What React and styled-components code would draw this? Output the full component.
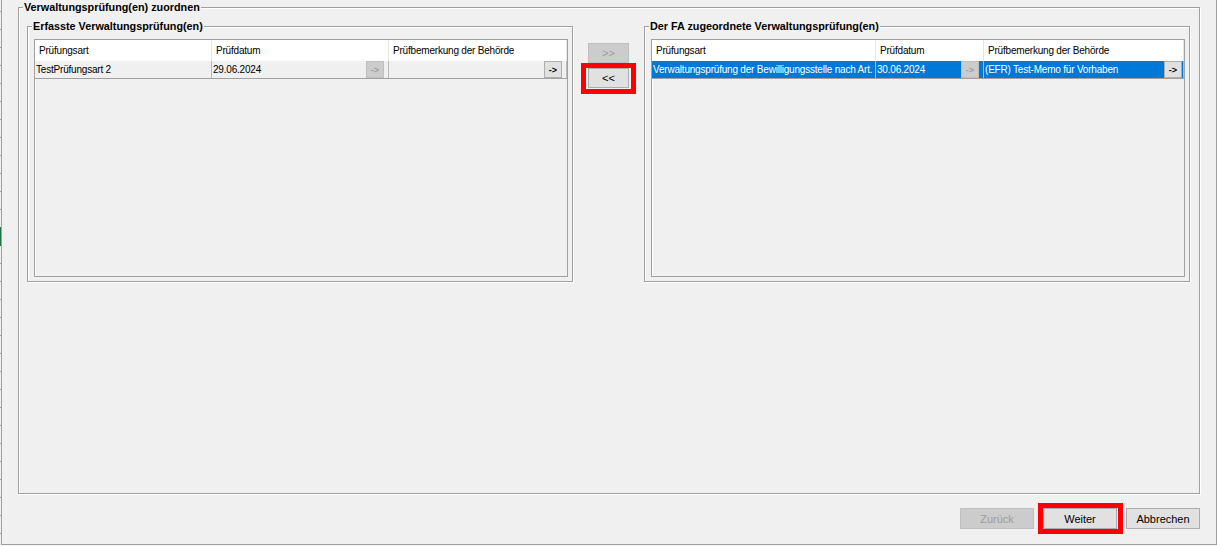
import React from 'react'
import styled, { createGlobalStyle, css } from 'styled-components'

const GlobalStyle = createGlobalStyle`
  html, body {
    margin: 0;
    padding: 0;
    background: #f0f0f0;
  }
  body {
    font-family: "Liberation Sans", Arial, sans-serif;
    font-size: 11px;
    color: #000;
  }
  #root {
    width: 1217px;
    height: 546px;
    overflow: hidden;
  }
`

const leftRows = [
  { art: 'TestPrüfungsart 2', datum: '29.06.2024', memo: '' },
]

const rightRows = [
  {
    art: 'Verwaltungsprüfung der Bewilligungsstelle nach Art.',
    datum: '30.06.2024',
    memo: '(EFR) Test-Memo für Vorhaben',
    selected: true,
  },
]

const App = () => {
  return (
    <>
      <GlobalStyle />
      <Screen>
        <SheetEdge />
        <Window>
          <OuterGroup>
            <Legend $shift={-4}>Verwaltungsprüfung(en) zuordnen</Legend>
            <Columns>
              <Group>
                <Legend $shift={-2}>Erfasste Verwaltungsprüfung(en)</Legend>
                <CheckTable cols="177px 177px 1fr" rows={leftRows} memoGap={4} />
              </Group>
              <Shuttle>
                <SideButton disabled>&gt;&gt;</SideButton>
                <SideButton $marked $ring="-6px -8px -7px -8px">&lt;&lt;</SideButton>
              </Shuttle>
              <Group>
                <Legend $shift={-2}>Der FA zugeordnete Verwaltungsprüfung(en)</Legend>
                <CheckTable cols="224px 108px 1fr" rows={rightRows} memoGap={1} />
              </Group>
            </Columns>
          </OuterGroup>
          <Footer>
            <DialogButton disabled>Zurück</DialogButton>
            <DialogButton $marked $ring="-6px -7px -6px -6px">Weiter</DialogButton>
            <DialogButton>Abbrechen</DialogButton>
          </Footer>
        </Window>
      </Screen>
    </>
  )
}

const CheckTable = ({ cols, rows, memoGap }) => (
  <Table>
    <HeadRow $cols={cols}>
      <HeadCell>Prüfungsart</HeadCell>
      <HeadCell>Prüfdatum</HeadCell>
      <HeadCell>Prüfbemerkung der Behörde</HeadCell>
    </HeadRow>
    {rows.map((row, i) => (
      <BodyRow key={i} $cols={cols} $selected={row.selected}>
        <Cell>
          <CellText>{row.art}</CellText>
        </Cell>
        <Cell>
          <CellText>{row.datum}</CellText>
          <CellButton disabled $gap={4}>-&gt;</CellButton>
        </Cell>
        <Cell>
          <CellText>{row.memo}</CellText>
          <CellButton $gap={memoGap}>-&gt;</CellButton>
        </Cell>
      </BodyRow>
    ))}
  </Table>
)

export default App

const Screen = styled.div`
  display: flex;
  width: 1217px;
  height: 546px;
`

// spreadsheet behind the dialog: row lines and the active-row marker
const SheetEdge = styled.div`
  width: 1px;
  flex: none;
  background:
    linear-gradient(#217346, #217346) 0 227px / 1px 19px no-repeat,
    repeating-linear-gradient(
      to bottom,
      transparent 0 11px,
      #a0a0a0 11px 12px,
      transparent 12px 18px
    );
`

const Window = styled.div`
  flex: 1;
  height: 545px;
  box-sizing: border-box;
  border: 1px solid #a0a0a0;
  border-top: none;
  display: flex;
  flex-direction: column;
`

const etched = css`
  border: 1px solid #a0a0a0;
  box-shadow: inset 1px 1px 0 #fff, 1px 1px 0 #fff;
  min-width: 0;
  margin: 0;
  box-sizing: border-box;
`

const OuterGroup = styled.fieldset`
  ${etched}
  margin: 0 16px;
  height: 494px;
  padding: 5px 9px 0 8px;
`

const Legend = styled.legend`
  margin-left: ${p => p.$shift}px;
  padding: 0 1px;
  font-weight: bold;
  font-size: 10.8px;
  line-height: 14px;
  background: #f0f0f0;
  white-space: nowrap;
`

const Columns = styled.div`
  display: flex;
  align-items: flex-start;
`

const Group = styled.fieldset`
  ${etched}
  width: 546px;
  flex: none;
  padding: 6px 4px 4px 6px;
`

const Shuttle = styled.div`
  flex: 1;
  display: flex;
  flex-direction: column;
  align-items: center;
  gap: 5px;
  padding-top: 24px;
`

const Table = styled.div`
  height: 238px;
  box-sizing: border-box;
  border: 1px solid #a0a0a0;
  box-shadow: inset 1px 1px 0 #fff;
  background: #f0f0f0;
  overflow: hidden;
`

const HeadRow = styled.div`
  display: grid;
  grid-template-columns: ${p => p.$cols};
  height: 21px;
  background: #fff;
`

const HeadCell = styled.div`
  padding-left: 4px;
  line-height: 21px;
  font-size: 10px;
  letter-spacing: -0.2px;
  border-right: 1px solid #e5e5e5;
  white-space: nowrap;
  overflow: hidden;
`

const BodyRow = styled.div`
  display: grid;
  grid-template-columns: ${p => p.$cols};
  height: 18px;
  box-sizing: border-box;
  border-bottom: 1px solid #a0a0a0;
  background: ${p => (p.$selected ? '#0078d7' : '#f0f0f0')};
  color: ${p => (p.$selected ? '#fff' : '#000')};
`

const Cell = styled.div`
  display: flex;
  align-items: center;
  min-width: 0;
  padding-left: 1px;
  border-right: 1px solid #b9b9b9;
  font-size: 10px;
  letter-spacing: -0.2px;
`

const CellText = styled.span`
  flex: 1;
  min-width: 0;
  white-space: nowrap;
  overflow: hidden;
`

const buttonFace = css`
  font-family: "Liberation Sans", Arial, sans-serif;
  color: #000;
  background: #e1e1e1;
  border: 1px solid #adadad;
  box-sizing: border-box;
  padding: 0;
  cursor: default;

  &:disabled {
    background: #cccccc;
    border-color: #bfbfbf;
    color: #9d9d9d;
  }

  ${p => p.$marked && css`
    position: relative;
    &::after {
      content: '';
      position: absolute;
      inset: ${p.$ring};
      border: 5px solid #ff0000;
      pointer-events: none;
    }
  `}
`

const CellButton = styled.button`
  ${buttonFace}
  flex: none;
  width: 18px;
  height: 17px;
  margin-right: ${p => p.$gap}px;
  font-size: 9px;
  font-weight: bold;
  letter-spacing: 0;
`

const SideButton = styled.button`
  ${buttonFace}
  width: 41px;
  height: 20px;
  font-size: 11px;
`

const Footer = styled.div`
  display: flex;
  justify-content: flex-end;
  gap: 9px;
  margin-top: 14px;
  padding-right: 16px;
`

const DialogButton = styled.button`
  ${buttonFace}
  width: 74px;
  height: 21px;
  font-size: 11px;
`
